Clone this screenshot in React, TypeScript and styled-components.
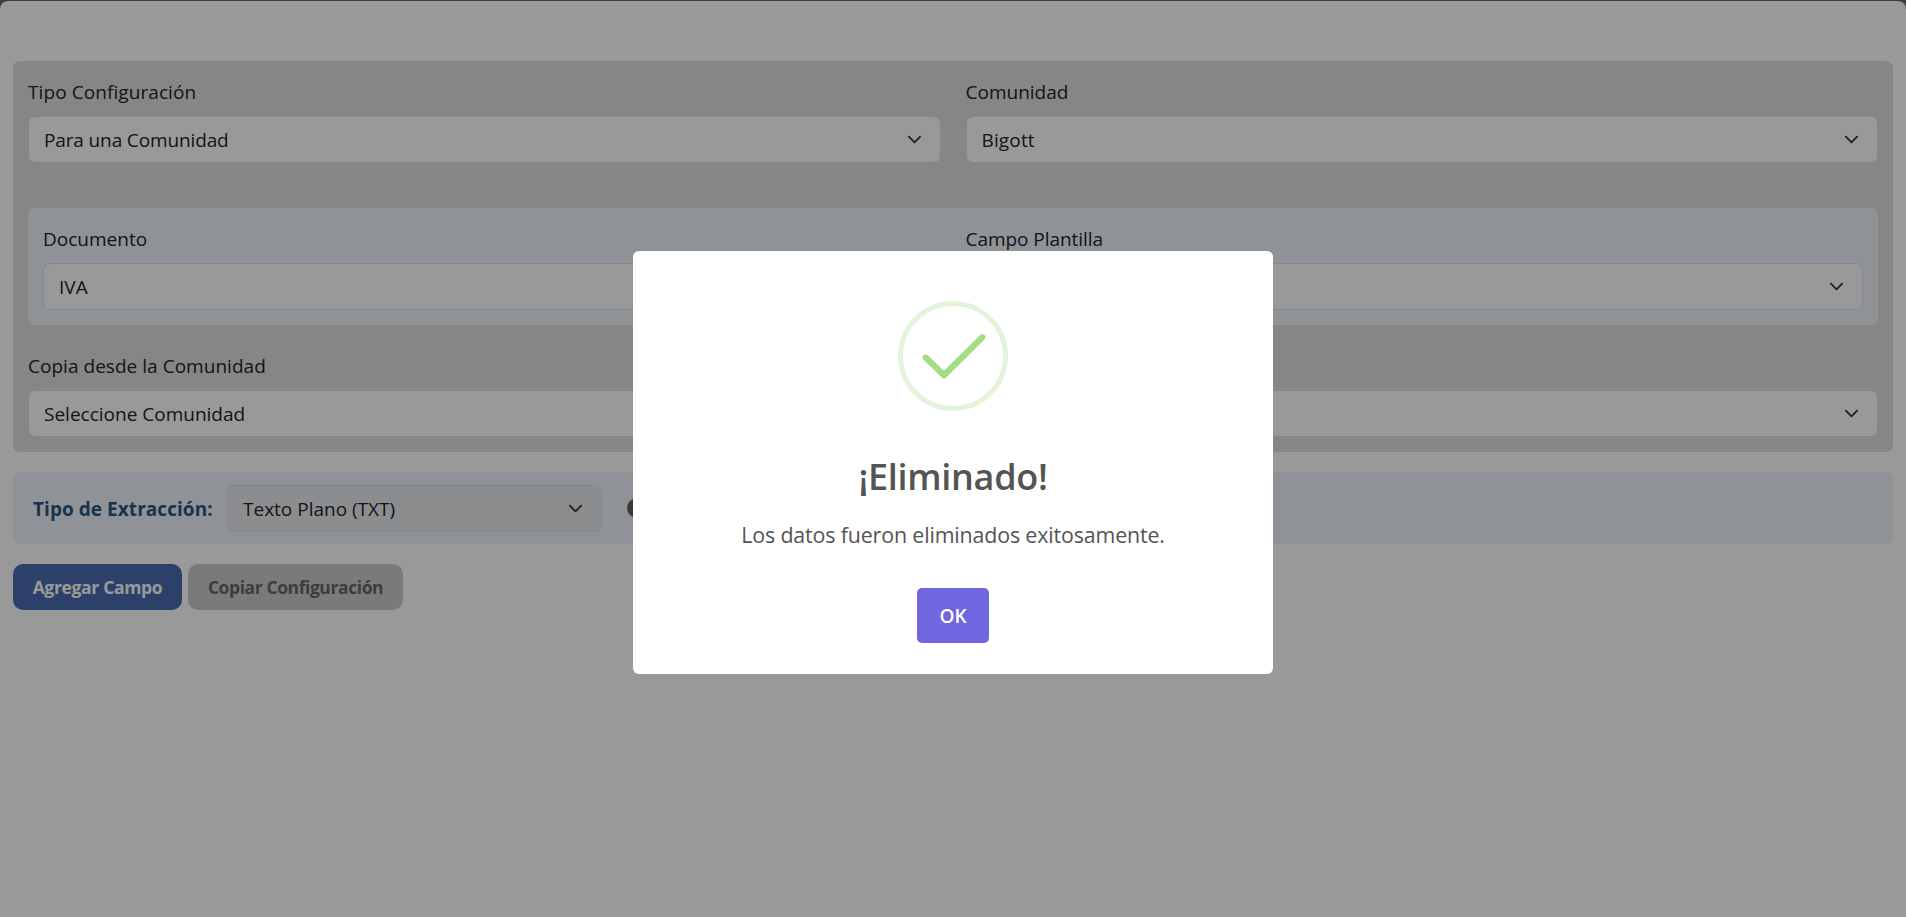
import React from "react";
import styled, { createGlobalStyle } from "styled-components";

const GlobalStyle = createGlobalStyle`
  *, *::before, *::after { box-sizing: border-box; }
  body {
    margin: 0;
    background: #636363;
    color: #212529;
    font-family: "Segoe UI", "Open Sans", "Noto Sans", sans-serif;
    font-size: 19px;
    line-height: 30px;
    overflow: hidden;
  }
`;

const Page = styled.main`
  min-height: 916px;
  margin-top: 1px;
  padding: 60px 13px 0;
  background: #fff;
  border-radius: 8px 8px 0 0;
`;

const FilterCard = styled.section`
  display: flex;
  flex-direction: column;
  padding: 15px;
  background: #dfdfdf;
  border-radius: 7px;
`;

const Row = styled.div`
  display: grid;
  grid-template-columns: 1fr 1fr;
  gap: 25px;
`;

const DocumentBox = styled.div`
  margin: 45px 0 25px;
  padding: 15px;
  background: #eef5fc;
  border-radius: 7px;
`;

const Field = styled.div`
  display: flex;
  flex-direction: column;
  gap: 9px;
  min-width: 0;
  padding-top: 1px;
`;

const Text = styled.span<{ $spacing?: number }>`
  letter-spacing: ${(p) => p.$spacing ?? 0}px;
  white-space: nowrap;
`;

const SelectBox = styled.div<{ $border?: string; $fill?: string; $width?: string }>`
  display: flex;
  align-items: center;
  justify-content: space-between;
  width: ${(p) => p.$width ?? "100%"};
  height: 47px;
  padding: 0 18px 0 15px;
  border: 1px solid ${(p) => p.$border ?? "#dfdfdf"};
  border-radius: 7px;
  background: ${(p) => p.$fill ?? "#fff"};

  ${Text} {
    padding-top: 1px;
  }
`;

const ExtractionBar = styled.section`
  display: flex;
  align-items: center;
  height: 72px;
  margin-top: 20px;
  padding: 0 20px;
  background: #eef5fc;
  border-radius: 7px;
`;

const ExtractionLabel = styled.label`
  width: 194px;
  padding-top: 1px;
  color: #2a567f;
  font-weight: 700;
`;

const InfoDot = styled.span`
  width: 20px;
  height: 20px;
  margin-left: 25px;
  border-radius: 50%;
  background: #625d5d;
`;

const Actions = styled.div`
  display: flex;
  gap: 6px;
  margin-top: 20px;
`;

const ActionButton = styled.button<{ $muted?: boolean }>`
  display: flex;
  align-items: center;
  justify-content: center;
  width: ${(p) => (p.$muted ? 215 : 169)}px;
  height: 46px;
  padding: 0;
  border: 0;
  border-radius: 10px;
  background: ${(p) => (p.$muted ? "#cccccc" : "#4b6caf")};
  color: ${(p) => (p.$muted ? "#666666" : "#ffffff")};
  font: 700 17.5px/30px "Segoe UI", "Open Sans", sans-serif;
`;

const Backdrop = styled.div`
  position: fixed;
  inset: 0;
  display: flex;
  justify-content: center;
  align-items: flex-start;
  padding-top: 251px;
  background: rgba(0, 0, 0, 0.4);
`;

const Dialog = styled.div`
  display: flex;
  flex-direction: column;
  align-items: center;
  width: 640px;
  height: 423px;
  padding-top: 50px;
  background: #fff;
  border-radius: 6px;
`;

const DialogTitle = styled.h2`
  margin: 38px 0 0;
  color: #545454;
  font-size: 36px;
  font-weight: 600;
  line-height: 56px;
`;

const DialogText = styled.p`
  margin: 13px 0 0;
  color: #545454;
  font-size: 21.4px;
  line-height: 34px;
`;

const ConfirmButton = styled.button`
  width: 72px;
  height: 55px;
  margin-top: 36px;
  padding: 0;
  border: 0;
  border-radius: 5px;
  background: #7066e0;
  color: #fff;
  font: 600 19px/30px "Segoe UI", "Open Sans", sans-serif;
`;

const Chevron = () => (
  <svg width="15" height="15" viewBox="0 0 16 16" fill="none" stroke="#343a40" strokeWidth="2" strokeLinecap="round" strokeLinejoin="round">
    <path d="m2 5 6 6 6-6" />
  </svg>
);

const SuccessIcon = () => (
  <svg width="110" height="110" viewBox="0 0 110 110" fill="none">
    <circle cx="55" cy="55" r="52.5" stroke="#e4f4db" strokeWidth="5" />
    <path d="M27.7 56.5 46 74.3 84.3 36.2" stroke="#a5dc86" strokeWidth="6.2" strokeLinecap="round" strokeLinejoin="round" />
  </svg>
);

type SelectProps = { value: string; spacing?: number; border?: string; fill?: string; width?: string };

const Select = ({ value, spacing, border, fill, width }: SelectProps) => (
  <SelectBox $border={border} $fill={fill} $width={width}>
    <Text $spacing={spacing}>{value}</Text>
    <Chevron />
  </SelectBox>
);

type LabeledProps = SelectProps & { label: string; labelSpacing?: number };

const LabeledSelect = ({ label, labelSpacing, ...select }: LabeledProps) => (
  <Field>
    <Text $spacing={labelSpacing}>{label}</Text>
    <Select {...select} />
  </Field>
);

export default function App() {
  return (
    <>
      <GlobalStyle />
      <Page>
        <FilterCard>
          <Row>
            <LabeledSelect label="Tipo Configuración" labelSpacing={0.08} value="Para una Comunidad" spacing={-0.13} />
            <LabeledSelect label="Comunidad" value="Bigott" spacing={0.15} />
          </Row>
          <DocumentBox>
            <Row>
              <LabeledSelect label="Documento" value="IVA" border="#dee2e6" />
              <LabeledSelect label="Campo Plantilla" labelSpacing={-0.05} value="" border="#dee2e6" />
            </Row>
          </DocumentBox>
          <LabeledSelect label="Copia desde la Comunidad" labelSpacing={0.03} value="Seleccione Comunidad" />
        </FilterCard>
        <ExtractionBar>
          <ExtractionLabel>
            <Text $spacing={0.05}>Tipo de Extracción:</Text>
          </ExtractionLabel>
          <Select value="Texto Plano (TXT)" border="#dee2e6" fill="#e9ecef" width="375px" />
          <InfoDot />
        </ExtractionBar>
        <Actions>
          <ActionButton>
            <Text $spacing={-0.33}>Agregar Campo</Text>
          </ActionButton>
          <ActionButton $muted>
            <Text $spacing={-0.42}>Copiar Configuración</Text>
          </ActionButton>
        </Actions>
      </Page>
      <Backdrop>
        <Dialog role="dialog">
          <SuccessIcon />
          <DialogTitle>
            <Text $spacing={-0.3}>¡Eliminado!</Text>
          </DialogTitle>
          <DialogText>
            <Text $spacing={-0.15}>Los datos fueron eliminados exitosamente.</Text>
          </DialogText>
          <ConfirmButton>
            <Text>OK</Text>
          </ConfirmButton>
        </Dialog>
      </Backdrop>
    </>
  );
}
